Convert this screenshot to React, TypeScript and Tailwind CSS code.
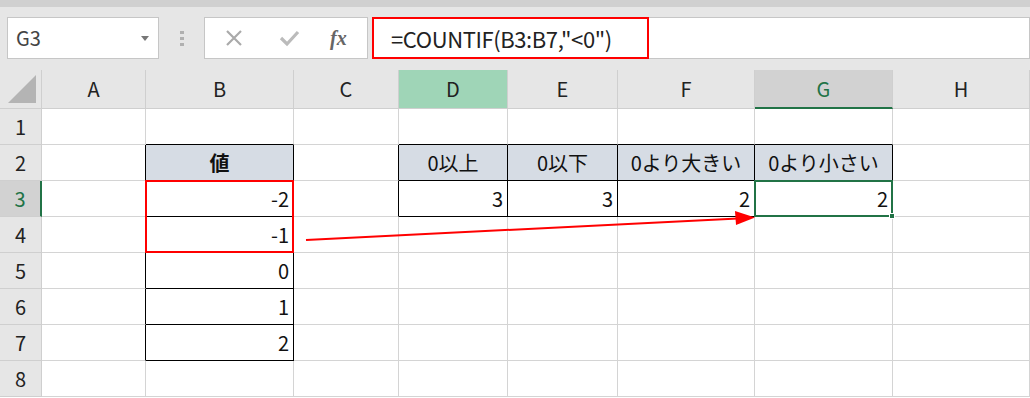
import { ReactNode } from "react"

const COLS = ["A", "B", "C", "D", "E", "F", "G", "H"]
const FONT = { fontFamily: '"Noto Sans CJK JP", "Noto Sans", sans-serif' }
const GRID = "grid grid-cols-[42px_104px_148px_105px_109px_110px_137px_138px_137px] grid-rows-[39px_repeat(8,36px)]"

type Cell = { text?: string; head?: boolean; bold?: boolean; right?: boolean }

// row -> col index (0 = A) -> cell
const data: Record<number, Record<number, Cell>> = {
	2: {
		1: { text: "値", head: true, bold: true },
		3: { text: "0以上", head: true },
		4: { text: "0以下", head: true },
		5: { text: "0より大きい", head: true },
		6: { text: "0より小さい", head: true },
	},
	3: { 1: { text: "-2", right: true }, 3: { text: "3", right: true }, 4: { text: "3", right: true }, 5: { text: "2", right: true }, 6: { text: "2", right: true } },
	4: { 1: { text: "-1", right: true } },
	5: { 1: { text: "0", right: true } },
	6: { 1: { text: "1", right: true } },
	7: { 1: { text: "2", right: true } },
}

function inTable(r: number, c: number) {
	if (c === 1 && r >= 2 && r <= 7) return true
	if (c >= 3 && c <= 6 && r >= 2 && r <= 3) return true
	return false
}

function Toolbar() {
	return (
		<div className="h-[70px] bg-[#e6e6e6] border-t-[7px] border-[#d0d0d0] flex items-start pt-[10px] pl-[7px]">
			<div className="w-[152px] h-[42px] bg-white border border-[#c6c6c6] flex items-center justify-between pl-[8px] pr-[9px]">
				<span className="text-[20px] text-[#444]">G3</span>
				<span className="w-0 h-0 border-l-[4px] border-r-[4px] border-t-[5px] border-l-transparent border-r-transparent border-t-[#777]" />
			</div>
			<div className="w-[45px] h-[42px] flex flex-col items-center justify-center gap-[3px]">
				<span className="w-[4px] h-[3px] bg-[#b0b0b0]" />
				<span className="w-[4px] h-[3px] bg-[#b0b0b0]" />
				<span className="w-[4px] h-[3px] bg-[#b0b0b0]" />
			</div>
			<div className="w-[164px] h-[42px] bg-white border border-[#c6c6c6] flex items-center">
				<svg width="20" height="20" viewBox="0 0 20 20" className="ml-[19px]">
					<path d="M3 3 L17 17 M17 3 L3 17" stroke="#aaa" strokeWidth="2.2" />
				</svg>
				<svg width="22" height="20" viewBox="0 0 22 20" className="ml-[34px]">
					<path d="M3 10 L9 16 L20 4" stroke="#bbb" strokeWidth="3.2" fill="none" />
				</svg>
				<span className="ml-[30px] text-[20px] italic font-bold text-[#666]" style={{ fontFamily: '"Liberation Serif", serif' }}>
					fx
				</span>
			</div>
			<div className="flex-1 h-[42px] bg-white border border-[#c6c6c6] ml-[4px] flex items-stretch">
				<div className="w-[277px] -ml-px -mt-px -mb-px border-2 border-[#ff0000] flex items-center pl-[17px]">
					<span className="text-[22px] text-[#222] tracking-[-0.4px]">=COUNTIF(B3:B7,"&lt;0")</span>
				</div>
			</div>
		</div>
	)
}

function Sheet() {
	const cells: ReactNode[] = []

	// corner
	cells.push(
		<div key="corner" className="bg-[#e6e6e6] border-r border-b border-[#cfcfcf] flex items-end justify-end pr-[4px] pb-[4px]">
			<svg width="30" height="30">
				<polygon points="29,1 29,29 1,29" fill="#b4b4b4" />
			</svg>
		</div>,
	)
	COLS.forEach((c, i) => {
		const cls =
			i === 3
				? "bg-[#9fd5b7] border-r border-b border-[#cfcfcf] text-[#222]"
				: i === 6
					? "bg-[#d2d2d2] border-r border-b-2 border-r-[#cfcfcf] border-b-[#217346] text-[#217346]"
					: "bg-[#e6e6e6] border-r border-b border-[#cfcfcf] text-[#222]"
		cells.push(
			<div key={"h" + c} className={`${cls} flex items-center justify-center text-[20px]`}>
				{c}
			</div>,
		)
	})

	for (let r = 1; r <= 8; r++) {
		cells.push(
			<div
				key={"r" + r}
				className={
					r === 3
						? "bg-[#d2d2d2] border-r-2 border-b border-r-[#217346] border-b-[#cfcfcf] text-[#217346] flex items-center justify-center text-[20px]"
						: "bg-[#e6e6e6] border-r border-b border-[#cfcfcf] text-[#222] flex items-center justify-center text-[20px]"
				}
			>
				{r}
			</div>,
		)
		for (let c = 0; c < COLS.length; c++) {
			const cell = data[r]?.[c]
			const rightBlack = inTable(r, c) || inTable(r, c + 1)
			const bottomBlack = inTable(r, c) || inTable(r + 1, c)
			const br = rightBlack ? "border-r-black" : "border-r-[#d4d4d4]"
			const bb = bottomBlack ? "border-b-black" : "border-b-[#d4d4d4]"
			const bg = cell?.head ? "bg-[#d6dce4]" : "bg-white"
			const align = cell?.right ? "justify-end pr-[4px]" : "justify-center"
			cells.push(
				<div
					key={r + "-" + c}
					className={`border-r border-b ${br} ${bb} ${bg} ${align} flex items-center text-[20px] text-[#111] whitespace-nowrap overflow-hidden ${cell?.bold ? "font-bold" : ""}`}
				>
					{cell?.text}
				</div>,
			)
		}
	}

	return (
		<div className="relative">
			<div className={GRID}>{cells}</div>

			{/* overlays: highlight box, selection, arrow */}
			<div className={`${GRID} absolute inset-0 pointer-events-none`}>
				<div className="col-start-3 row-start-4 row-span-2 -ml-px -mt-px border-2 border-[#ff0000]" />
				<div className="col-start-8 row-start-4 -ml-px -mt-px border-2 border-[#217346] relative">
					<span className="absolute -right-[4px] -bottom-[4px] w-[6px] h-[6px] bg-[#217346] border border-white" />
				</div>
			</div>
			<svg width="1030" height="330" className="absolute left-0 top-0 pointer-events-none">
				<line x1="306" y1="170" x2="738" y2="148.5" stroke="#ff0000" strokeWidth="2" />
				<polygon points="755,147.5 735,141 736,155" fill="#ff0000" />
			</svg>
		</div>
	)
}

export default function App() {
	return (
		<div className="w-[1030px] h-[398px] overflow-hidden bg-white" style={FONT}>
			<Toolbar />
			<Sheet />
		</div>
	)
}
